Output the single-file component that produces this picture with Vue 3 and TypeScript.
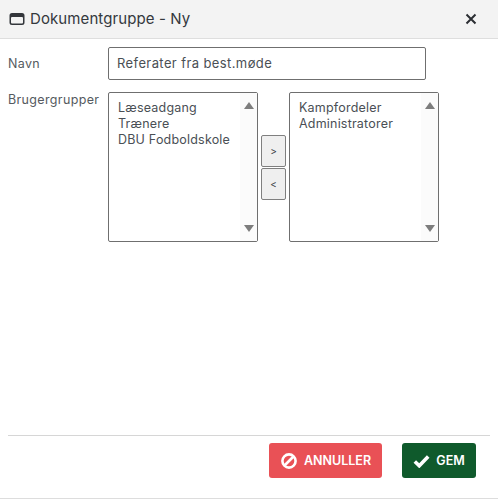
<script setup lang="ts">
const leftGroups = ["Læseadgang", "Trænere", "DBU Fodboldskole"];
const rightGroups = ["Kampfordeler", "Administratorer"];
const lists = [leftGroups, rightGroups];
</script>

<template>
  <div class="dialog">
    <header class="head">
      <div class="title">
        <svg class="win-icon" width="16" height="14" viewBox="0 0 16 14">
          <path fill="#33363b" d="M3 1h10a2.500 2.500 0 0 1 2.500 2.500v7A2.500 2.500 0 0 1 13 13H3a2.500 2.500 0 0 1-2.500-2.500v-7A2.500 2.500 0 0 1 3 1z" />
          <rect x="2" y="5" width="12" height="6.500" rx="1" fill="#f3f3f3" />
        </svg>
        <span>Dokumentgruppe - Ny</span>
      </div>
      <svg class="close" width="12" height="12" viewBox="0 0 12 12">
        <path d="M1.500 1.500l9 9M10.500 1.500l-9 9" stroke="#2b2e33" stroke-width="2" fill="none" />
      </svg>
    </header>

    <main class="body">
      <div class="row">
        <label class="label name-label">Navn</label>
        <div class="input">Referater fra best.møde</div>
      </div>
      <div class="row groups">
        <label class="label">Brugergrupper</label>
        <div class="picker">
          <div class="list">
            <div class="items">
              <div v-for="g in lists[0]" :key="g">{{ g }}</div>
            </div>
            <div class="scroll">
              <span class="arrow up"></span>
              <span class="arrow down"></span>
            </div>
          </div>
          <div class="moves">
            <button class="move">&gt;</button>
            <button class="move">&lt;</button>
          </div>
          <div class="list">
            <div class="items">
              <div v-for="g in lists[1]" :key="g">{{ g }}</div>
            </div>
            <div class="scroll">
              <span class="arrow up"></span>
              <span class="arrow down"></span>
            </div>
          </div>
        </div>
      </div>
    </main>

    <footer class="foot">
      <button class="btn cancel">
        <svg width="18" height="18" viewBox="0 0 18 18">
          <circle cx="9" cy="9" r="6.600" stroke="#fff" stroke-width="2.600" fill="none" />
          <path d="M4.500 13.500l9-9" stroke="#fff" stroke-width="2.600" />
        </svg>
        ANNULLER
      </button>
      <button class="btn save">
        <svg width="17" height="14" viewBox="0 0 17 14">
          <path d="M1.800 7.500l4.500 4.300L15.200 2.600" stroke="#fff" stroke-width="3.600" fill="none" />
        </svg>
        GEM
      </button>
    </footer>
  </div>
</template>

<style>
html,
body {
  margin: 0;
  background: #fff;
}
</style>

<style scoped>
.dialog {
  width: 498px;
  height: 499px;
  box-sizing: border-box;
  display: flex;
  flex-direction: column;
  border-bottom: 1px solid #ddd;
  font-family: Inter, "Open Sans", sans-serif;
  color: #4a4f55;
  font-size: 13px;
  letter-spacing: 0.4px;
  overflow: hidden;
}

.head {
  height: 39px;
  box-sizing: border-box;
  flex: none;
  display: flex;
  align-items: center;
  justify-content: space-between;
  padding: 0 21px 1px 9px;
  background: #f3f3f3;
  border-bottom: 1px solid #dedede;
}

.title {
  display: flex;
  align-items: center;
  gap: 5px;
  font-size: 15px;
  letter-spacing: 0.1px;
  color: #34383d;
}

.body {
  flex: 1;
  padding: 8px 8px 0;
}

.row {
  display: flex;
}

.groups {
  margin-top: 12px;
}

.label {
  width: 100px;
  flex: none;
  color: #555a60;
  font-size: 12.500px;
  letter-spacing: 0.35px;
  line-height: 15px;
}

.name-label {
  line-height: 33px;
}

.input {
  width: 318px;
  height: 33px;
  box-sizing: border-box;
  border: 1px solid #6f6f6f;
  border-radius: 2px;
  padding-left: 8px;
  line-height: 31px;
}

.picker {
  display: flex;
}

.list {
  width: 150px;
  height: 150px;
  box-sizing: border-box;
  border: 1px solid #6f6f6f;
  border-radius: 2px;
  display: flex;
  justify-content: space-between;
}

.items {
  padding: 7px 0 0 9px;
  font-size: 12.500px;
  letter-spacing: 0.2px;
  line-height: 16px;
}

.scroll {
  width: 17px;
  background: #fbfbfb;
  display: flex;
  flex-direction: column;
  justify-content: space-between;
  align-items: center;
  padding: 9px 0;
}

.arrow {
  width: 0;
  height: 0;
  border-left: 5px solid transparent;
  border-right: 5px solid transparent;
}

.up {
  border-bottom: 7px solid #7d7d7d;
}

.down {
  border-top: 7px solid #7d7d7d;
}

.moves {
  width: 31px;
  display: flex;
  flex-direction: column;
  align-items: center;
  justify-content: center;
  gap: 1px;
}

.move {
  width: 25px;
  height: 32px;
  padding: 0;
  border: 1px solid #7f7f7f;
  border-radius: 2px;
  background: #efefef;
  color: #3b4046;
  font-family: inherit;
  font-size: 10px;
}

.foot {
  flex: none;
  height: 63px;
  margin: 0 8px;
  box-sizing: border-box;
  border-top: 1px solid #d6d6d6;
  display: flex;
  justify-content: flex-end;
  gap: 20px;
  padding: 7px 14px 0 0;
}

.btn {
  height: 35px;
  border: none;
  border-radius: 3px;
  color: #fff;
  font-family: inherit;
  font-size: 12.500px;
  font-weight: 600;
  letter-spacing: 0;
  display: flex;
  align-items: center;
  padding: 0;
  justify-content: center;
}

.cancel {
  width: 113px;
  gap: 6px;
  background: #e95156;
}

.save {
  width: 74px;
  gap: 6px;
  background: #0f5a2c;
}
</style>
